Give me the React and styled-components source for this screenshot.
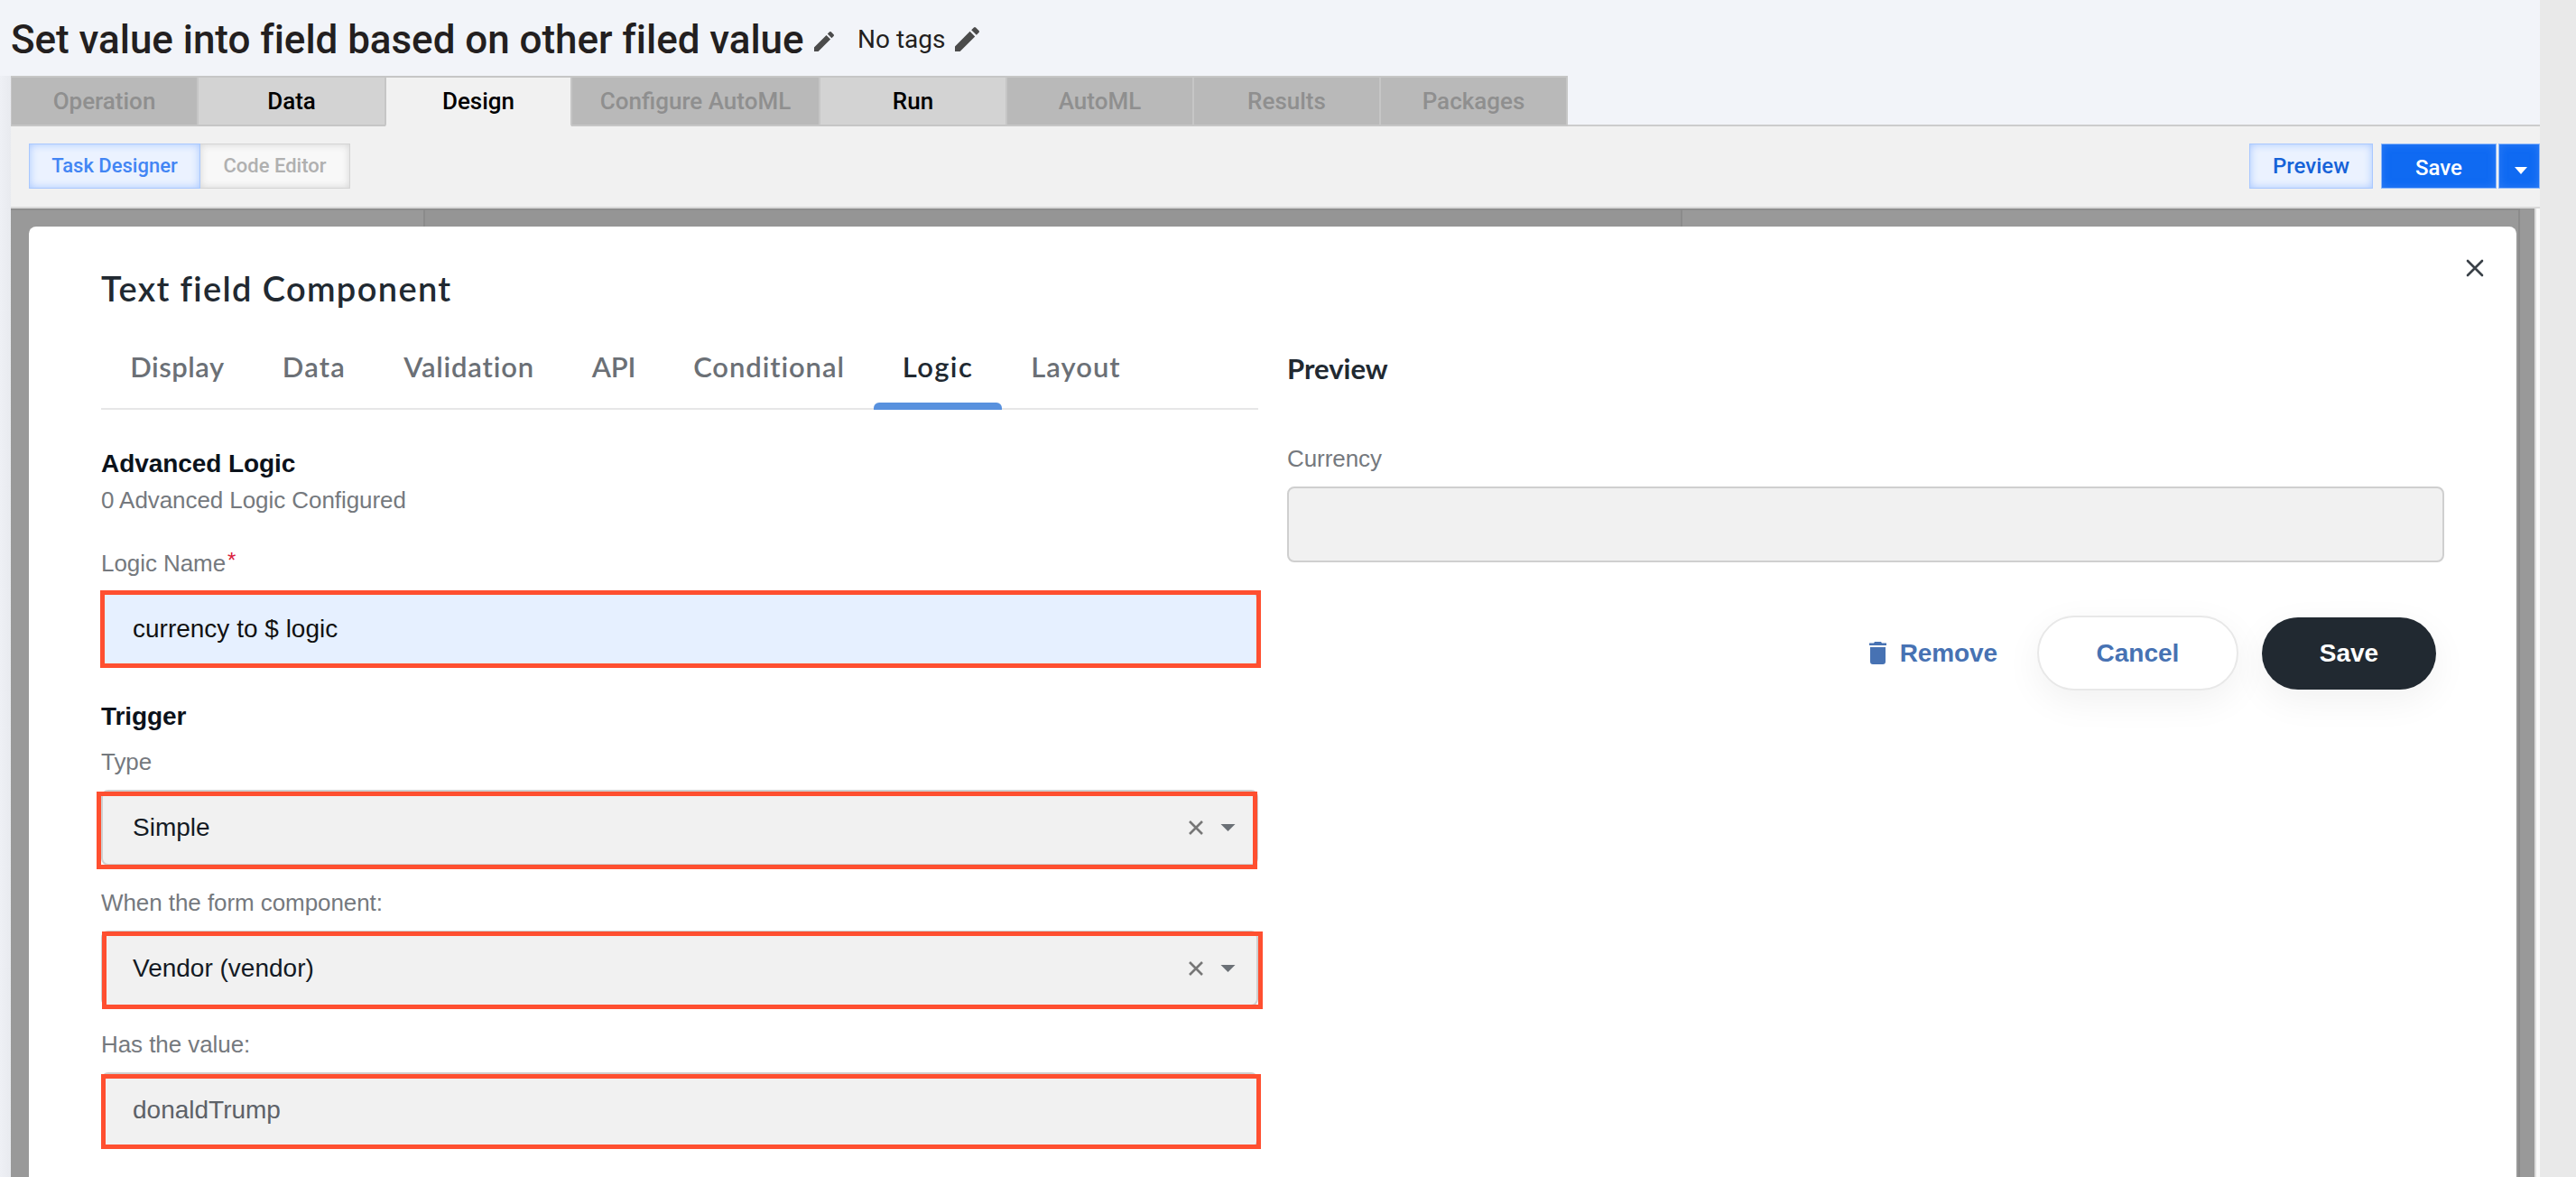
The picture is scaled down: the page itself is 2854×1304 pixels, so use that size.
import React from "react";
import styled, { createGlobalStyle } from "styled-components";

const Global = createGlobalStyle`
  * { box-sizing: border-box; }
  body { margin: 0; background: #f2f4f9; font-family: "Liberation Sans", Arial, sans-serif; overflow: hidden; }
`;

const Page = styled.div`
  width: 2854px;
  height: 1304px;
  display: flex;
  overflow: hidden;
`;
const Main = styled.div`
  width: 2814px;
  display: flex;
  flex-direction: column;
`;
const SideRail = styled.aside`
  width: 40px;
  background: #e9e9e9;
`;
const Header = styled.header`
  height: 84px;
  padding-left: 12px;
  display: flex;
  font-family: Roboto, sans-serif;
  color: #231f20;
`;
const Title = styled.h1`
  margin: 0;
  width: 890px;
  font-size: 44px;
  font-weight: 500;
  line-height: 88px;
  letter-spacing: -0.05px;
  white-space: nowrap;
`;
const Tags = styled.div`
  margin-left: 48px;
  width: 108px;
  font-size: 28px;
  line-height: 88px;
  white-space: nowrap;
`;
const PencilWrap = styled.span`
  display: block;
  height: 84px;
  width: 0;
  padding-top: ${(p) => p.$top}px;
  svg { display: block; overflow: visible; }
`;
const Body = styled.div`
  flex: 1;
  padding-left: 12px;
  background: linear-gradient(90deg, #eef0f5 0, #e8eaef 12px, #e8eaef 100%);
  display: flex;
  flex-direction: column;
`;
const TabStrip = styled.nav`
  height: 56px;
  display: flex;
  background: #f2f4f9;
  box-shadow: inset 0 -2px #cccccc;
`;
const Tab = styled.div`
  width: ${(p) => p.$w}px;
  border: 2px solid #c6c6c6;
  border-right-width: ${(p) => (p.$last ? 2 : 1)}px;
  border-left-width: 1px;
  border-bottom-color: ${(p) => (p.$kind === "active" ? "#f1f1f1" : "#c6c6c6")};
  background: ${(p) => ({ off: "#b9b9b9", on: "#d3d3d3", active: "#f1f1f1" })[p.$kind]};
  color: ${(p) => (p.$kind === "off" ? "#8f8f8f" : "#000")};
  font: 500 26px/52px Roboto, sans-serif;
  text-align: center;
  white-space: nowrap;
`;
const Toolbar = styled.div`
  height: 91px;
  padding: 19px 0 0 20px;
  display: flex;
  background: #f1f1f1;
  border-bottom: 2px solid #d9d9d9;
`;
const Spacer = styled.div`
  flex: 1;
`;
const ToolButton = styled.button`
  width: ${(p) => p.$w}px;
  height: 50px;
  margin: 0 ${(p) => p.$gap || 0}px 0 0;
  padding: ${(p) => p.$drop || 0}px 0 0;
  border: 1px solid;
  font: 500 ${(p) => p.$size || 22}px/48px Roboto, sans-serif;
  display: flex;
  justify-content: center;
  ${(p) =>
    ({
      blue: "background:#ebf2ff;border-color:#a9c8ff;color:#4285f4;box-shadow:inset 0 0 10px #a9c8ff;",
      deep: "background:#ebf2ff;border-color:#a9c8ff;color:#1662d8;box-shadow:inset 0 0 10px #a9c8ff;",
      grey: "background:#f8f8f8;border-color:#d4d4d4;color:#b0b0b0;box-shadow:inset 0 0 9px #d4d4d4;border-left:0;",
      solid: "background:#0f6af2;border-color:#8db8fa;color:#fff;box-shadow:inset 0 0 10px #2f7df5;",
    })[p.$tone]}
`;
const Backdrop = styled.div`
  flex: 1;
  width: 2802px;
  display: grid;
  grid-template-columns: 459px 1393px 928px 16px 6px;
  grid-template-rows: 1fr;
  background: #999;
`;
const Pane = styled.div`
  grid-row: 1;
  grid-column: ${(p) => p.$col};
  background: ${(p) => p.$bg || "#999"};
  border-top: 2px solid #8d8d8d;
  border-right: 2px solid #8b8b8b;
`;
const Gutter = styled.div`
  grid-row: 1;
  grid-column: 5;
  background: #fafafa;
  border-left: 2px solid #dedede;
`;
const Modal = styled.section`
  grid-row: 1;
  grid-column: 1 / 6;
  z-index: 1;
  width: 2756px;
  margin: 20px 0 0 20px;
  padding: 0 80px;
  border-radius: 8px 8px 0 0;
  background: #fff;
`;
const ModalHead = styled.div`
  height: 127px;
  display: flex;
  justify-content: space-between;
`;
const ModalTitle = styled.h2`
  margin: 0;
  padding-top: 43px;
  font: 600 38px/50px Lato, sans-serif;
  letter-spacing: 1.35px;
  font-variant-ligatures: none;
  color: #212931;
`;
const CloseIcon = styled.svg`
  width: 20px;
  height: 20px;
  margin: 36px -44px 0 0;
`;
const Columns = styled.div`
  display: flex;
  gap: 32px;
`;
const Column = styled.div`
  width: 1282px;
`;
const FormTabs = styled.div`
  height: 76px;
  display: flex;
  border-bottom: 2px solid #e6e6e7;
`;
const FormTab = styled.div`
  width: ${(p) => p.$w}px;
  height: 76px;
  font: 600 31px/56px Lato, sans-serif;
  text-align: center;
  letter-spacing: ${(p) => p.$track}px;
  color: ${(p) => (p.$active ? "#212931" : "#6b7076")};
  display: flex;
  flex-direction: column;
  justify-content: space-between;
  &::after {
    content: "";
    height: ${(p) => (p.$active ? 8 : 0)}px;
    border-radius: 6px 6px 0 0;
    background: #5891de;
  }
`;
const TabText = styled.span`
  height: 66px;
`;
const SectionTitle = styled.h3`
  margin: ${(p) => p.$mt}px 0 0;
  font-size: 28px;
  line-height: 32px;
  letter-spacing: -0.08px;
  color: #0b121b;
`;
const Label = styled.div`
  margin-top: ${(p) => p.$mt}px;
  font-size: 26px;
  line-height: 30px;
  letter-spacing: -0.07px;
  color: #75797e;
`;
const Star = styled.sup`
  margin-left: 2px;
  font-size: 24px;
  line-height: 0;
  vertical-align: 4px;
  color: #d9203c;
`;
const Field = styled.div`
  position: relative;
  height: 84px;
  margin-top: ${(p) => p.$mt}px;
  padding: 0 23px 0 33px;
  display: flex;
  align-items: center;
  border: 2px solid #cfcfcf;
  border-radius: 8px;
  background: ${(p) => p.$bg || "#f1f1f1"};
  color: ${(p) => p.$color || "#131a24"};
  font-size: 28px;
  line-height: 32px;
`;
const Highlight = styled.span`
  position: absolute;
  left: ${(p) => p.$x}px;
  top: ${(p) => p.$y}px;
  width: ${(p) => p.$w || 1286}px;
  height: ${(p) => p.$h || 86}px;
  border: 5px solid #ff4f30;
`;
const FieldIcons = styled.svg`
  width: 52px;
  height: 16px;
  margin-left: auto;
`;
const PreviewTitle = styled.h3`
  margin: 12px 0 0;
  font: 700 31px/36px Lato, sans-serif;
  color: #212931;
`;
const Actions = styled.div`
  margin-top: 59px;
  padding-right: 9px;
  display: flex;
  align-items: center;
  justify-content: flex-end;
`;
const Remove = styled.button`
  margin: 0 44px 0 0;
  padding: 0;
  border: 0;
  background: none;
  display: flex;
  gap: 15px;
  align-items: center;
  font: 700 28px/32px "Liberation Sans", Arial, sans-serif;
  letter-spacing: -0.1px;
  color: #4772b3;
`;
const Pill = styled.button`
  width: ${(p) => p.$w}px;
  height: ${(p) => p.$h}px;
  margin: 0 0 0 ${(p) => p.$ml || 0}px;
  padding: 0;
  border: ${(p) => (p.$dark ? "0" : "2px solid #e8e8e8")};
  border-radius: 42px;
  background: ${(p) => (p.$dark ? "#212931" : "#fff")};
  color: ${(p) => (p.$dark ? "#fff" : "#4772b3")};
  font: 700 28px/32px "Liberation Sans", Arial, sans-serif;
  box-shadow: 0 12px 40px rgba(0, 0, 0, 0.06);
`;

const Pencil = ({ size }) => (
  <svg width={size} height={size} viewBox="3 3 18 18" fill="#4b4b4b">
    <path d="M3 17.25V21h3.75L17.81 9.94l-3.75-3.75L3 17.25zM20.71 7.04a1 1 0 0 0 0-1.41l-2.34-2.34a1 1 0 0 0-1.41 0l-1.83 1.83 3.75 3.75 1.83-1.83z" />
  </svg>
);

const ClearAndCaret = () => (
  <FieldIcons viewBox="0 0 52 16">
    <path d="M1 1 15 15M15 1 1 15" stroke="#777" strokeWidth="2.600" />
    <path d="M35.500 4H51.500L43.500 12Z" fill="#6b7076" />
  </FieldIcons>
);

const tabs = [
  ["Operation", 207, "off"],
  ["Data", 208, "on"],
  ["Design", 206, "active"],
  ["Configure AutoML", 275, "off"],
  ["Run", 207, "on"],
  ["AutoML", 207, "off"],
  ["Results", 207, "off"],
  ["Packages", 208, "off"],
];
const formTabs = [
  ["Display", 169, 0.5],
  ["Data", 134, 1.2],
  ["Validation", 209, 0.8],
  ["API", 112, -0.2],
  ["Conditional", 232, 0.9],
  ["Logic", 142, 1.4],
  ["Layout", 164, 1],
];

export default function App() {
  return (
    <Page>
      <Global />
      <Main>
        <Header>
          <Title>Set value into field based on other filed value</Title>
          <PencilWrap $top={35}>
            <Pencil size={22} />
          </PencilWrap>
          <Tags>No tags</Tags>
          <PencilWrap $top={30}>
            <Pencil size={27} />
          </PencilWrap>
        </Header>
        <Body>
          <TabStrip>
            {tabs.map(([name, w, kind], i) => (
              <Tab key={name} $w={w} $kind={kind} $last={i === tabs.length - 1}>
                {name}
              </Tab>
            ))}
          </TabStrip>
          <Toolbar>
            <ToolButton $w={190} $tone="blue">Task Designer</ToolButton>
            <ToolButton $w={166} $tone="grey">Code Editor</ToolButton>
            <Spacer />
            <ToolButton $w={137} $gap={9} $tone="deep" $size={24}>Preview</ToolButton>
            <ToolButton $w={128} $gap={2} $tone="solid" $size={24} $drop={2}>Save</ToolButton>
            <ToolButton $w={46} $tone="solid" $drop={25} aria-label="More save options">
              <svg width="14" height="8" viewBox="0 0 14 8" style={{ marginLeft: 3 }}>
                <path d="M0 0H14L7 8Z" fill="#fff" />
              </svg>
            </ToolButton>
          </Toolbar>
          <Backdrop>
            <Pane $col={1} />
            <Pane $col={2} $bg="#959595" />
            <Pane $col={3} />
            <Gutter />
            <Modal>
              <ModalHead>
                <ModalTitle>Text field Component</ModalTitle>
                <CloseIcon viewBox="0 0 20 20">
                  <path d="M2 2 18 18M18 2 2 18" stroke="#3a4148" strokeWidth="2.600" strokeLinecap="round" />
                </CloseIcon>
              </ModalHead>
              <Columns>
                <Column>
                  <FormTabs>
                    {formTabs.map(([name, w, track]) => (
                      <FormTab key={name} $w={w} $track={track} $active={name === "Logic"}>
                        <TabText>{name}</TabText>
                      </FormTab>
                    ))}
                  </FormTabs>
                  <SectionTitle $mt={44}>Advanced Logic</SectionTitle>
                  <Label $mt={9}>0 Advanced Logic Configured</Label>
                  <Label $mt={40}>
                    Logic Name<Star>*</Star>
                  </Label>
                  <Field $mt={16} $bg="#e6f0ff" $color="#111">
                    currency to $ logic
                    <Highlight $x={-3} $y={-3} />
                  </Field>
                  <SectionTitle $mt={39}>Trigger</SectionTitle>
                  <Label $mt={19}>Type</Label>
                  <Field $mt={16}>
                    Simple
                    <ClearAndCaret />
                    <Highlight $x={-7} $y={0} />
                  </Field>
                  <Label $mt={26}>When the form component:</Label>
                  <Field $mt={16}>
                    Vendor (vendor)
                    <ClearAndCaret />
                    <Highlight $x={-1} $y={-1} />
                  </Field>
                  <Label $mt={27}>Has the value:</Label>
                  <Field $mt={16} $color="#5d6268">
                    donaldTrump
                    <Highlight $x={-2} $y={0} $w={1285} $h={83} />
                  </Field>
                </Column>
                <Column>
                  <PreviewTitle>Preview</PreviewTitle>
                  <Label $mt={67}>Currency</Label>
                  <Field $mt={16} />
                  <Actions>
                    <Remove>
                      <svg width="19" height="25" viewBox="0 0 19 25" fill="#4772b3">
                        <path d="M0 1.500H5L6 0H13L14 1.500H19V4H0ZM1 6H18V22Q18 25 15 25H4Q1 25 1 22Z" />
                      </svg>
                      Remove
                    </Remove>
                    <Pill $w={223} $h={83}>Cancel</Pill>
                    <Pill $w={193} $h={80} $ml={26} $dark>Save</Pill>
                  </Actions>
                </Column>
              </Columns>
            </Modal>
          </Backdrop>
        </Body>
      </Main>
      <SideRail />
    </Page>
  );
}
